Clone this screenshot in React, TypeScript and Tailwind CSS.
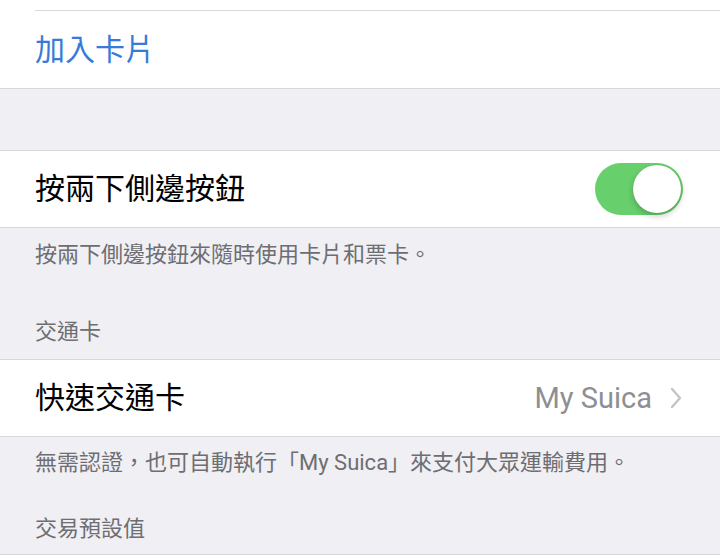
const FONT = "font-['Roboto','Noto_Sans_CJK_TC',sans-serif]"

function Toggle() {
  return (
    <div className="flex h-[52px] w-[88px] items-center justify-end rounded-full bg-[#67d06c] p-[2px]">
      <div className="size-[48px] rounded-full bg-white shadow-[0_3px_6px_rgba(0,0,0,0.22),0_0_1px_rgba(0,0,0,0.2)]" />
    </div>
  )
}

function Chevron() {
  return (
    <svg width="14" height="22" viewBox="0 0 14 22" fill="none" className="shrink-0">
      <polyline points="3,2 11,11 3,20" stroke="#c4c4c8" strokeWidth="2.4" strokeLinecap="round" strokeLinejoin="round" />
    </svg>
  )
}

export default function App() {
  return (
    <div className={`h-[558px] w-[720px] overflow-hidden bg-[#efeff4] ${FONT}`}>
      {/* Add card group */}
      <div className="border-b border-[#d8d8dc] bg-white">
        <div className="h-[10px]" />
        <div className="ml-[35px] h-px bg-[#d8d8dc]" />
        <div className="flex h-[77px] items-center px-[35px]">
          <span className="text-[30px] leading-none text-[#377bd8]">加入卡片</span>
        </div>
      </div>

      <div className="h-[61px]" />

      {/* Double click side button */}
      <div className="flex h-[78px] items-center justify-between border-y border-[#d8d8dc] bg-white pl-[35px] pr-[37px]">
        <span className="text-[30px] leading-none text-black">按兩下側邊按鈕</span>
        <Toggle />
      </div>
      <div className="px-[35px] pt-[13px] text-[22px] leading-[28px] text-[#6d6d72]">
        按兩下側邊按鈕來隨時使用卡片和票卡。
      </div>

      <div className="mt-[49px] mb-[13px] px-[35px] text-[22px] leading-[28px] text-[#6d6d72]">交通卡</div>

      {/* Express transit */}
      <div className="flex h-[78px] items-center justify-between border-y border-[#d8d8dc] bg-white pl-[35px] pr-[37px]">
        <span className="text-[30px] leading-none text-black">快速交通卡</span>
        <div className="flex items-center gap-[17px]">
          <span className="text-[29px] leading-none text-[#8e8e93]">My Suica</span>
          <Chevron />
        </div>
      </div>
      <div className="px-[35px] pt-[12px] text-[22px] leading-[28px] text-[#6d6d72]">
        無需認證，也可自動執行「My Suica」來支付大眾運輸費用。
      </div>

      <div className="mt-[38px] mb-[11px] px-[35px] text-[22px] leading-[28px] text-[#6d6d72]">交易預設值</div>
      <div className="h-[40px] border-t border-[#d8d8dc] bg-white" />
    </div>
  )
}
